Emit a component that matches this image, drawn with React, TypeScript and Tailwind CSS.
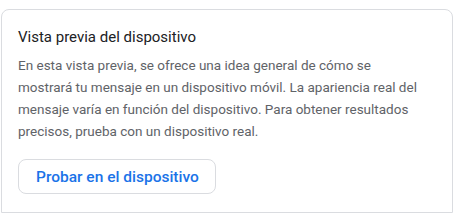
import React from "react";

export default function App() {
  return (
    <div className="w-[455px] h-[213px] bg-white overflow-hidden" style={{ fontFamily: "Roboto, 'Noto Sans', sans-serif" }}>
      <div className="ml-[1px] mr-[2px] mt-[9px] h-[204px] border border-[#dadce0] rounded-t-lg px-4 pt-[17px]">
        <h2 className="text-[15px] leading-[20px] text-[#202124] font-normal">Vista previa del dispositivo</h2>
        <p className="mt-[7px] text-[13.5px] leading-[22px] text-[#5f6368] pr-2">
          En esta vista previa, se ofrece una idea general de cómo se mostrará tu mensaje en un dispositivo móvil. La apariencia real del mensaje varía en función del dispositivo. Para obtener resultados precisos, prueba con un dispositivo real.
        </p>
        <button className="mt-[17px] h-[35px] pl-[17px] pr-[16px] border border-[#dadce0] rounded-lg text-[#1a73e8] text-[15.5px] font-medium leading-[20px]">
          Probar en el dispositivo
        </button>
      </div>
    </div>
  );
}
